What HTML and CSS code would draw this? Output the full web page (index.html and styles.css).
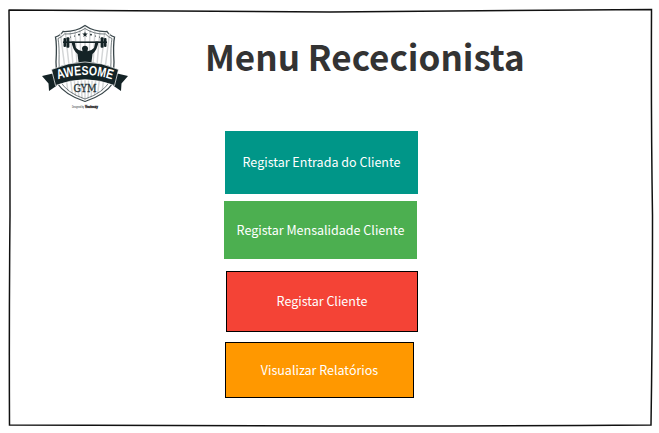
FILE: index.html
```html
<!DOCTYPE html>
<html lang="pt">
<head>
<meta charset="utf-8">
<title>Menu Rececionista</title>
<link rel="stylesheet" href="styles.css">
</head>
<body>
<main class="screen">
  <svg class="frame" viewBox="0 0 659 433" aria-hidden="true">
    <path d="M8.500 10Q170 11.200 330 12Q500 11.200 651.500 9.500Q651 120 652.500 215Q652.500 330 651 425Q490 426.300 330 426Q170 426 9.500 425Q9 320 10 215Q10 110 9 10"/>
  </svg>
  <header class="header">
    <svg class="logo" viewBox="0 0 100 95" role="img" aria-label="Awesome Gym">
      <defs>
        <clipPath id="shield"><path d="M50 7Q38 14 24 13Q22 24 23 42L24 62Q31 73 50 80Q69 73 76 62L77 42Q78 24 76 13Q62 14 50 7Z"/></clipPath>
        <path id="ribbon" d="M20 60.500Q50 49.500 80 60.500"/>
      </defs>
      <path class="rim" d="M50 5.500Q41 12 28 11.500Q26 15 20.500 17Q22 24 21 42L22 63Q30 75 50 81.500Q70 75 78 63L79 42Q78 24 79.500 17Q74 15 72 11.500Q59 12 50 5.500Z"/>
      <g clip-path="url(#shield)">
        <path class="rays" d="M25 10L34 80M30 10L38 80M35 10L41 80M40 10L44 80M45 10L47 80M50 7V80M55 10L53 80M60 10L56 80M65 10L59 80M70 10L62 80M75 10L66 80"/>
      </g>
      <path class="inner" d="M50 8.500Q41 14.500 29.500 14Q27 17 23 18.500Q24.500 26 24 42L25 61Q32 73 50 79Q68 73 75 61L76 42Q75.500 26 77 18.500Q73 17 70.500 14Q59 14.500 50 8.500Z"/>
      <path class="ink" d="M50 11.500L50.700 13.500L52.800 13.600L51.100 14.900L51.700 17L50 15.800L48.300 17L48.900 14.900L47.200 13.600L49.300 13.500Z"/>
      <g class="ink">
        <circle cx="44" cy="14.700" r=".9"/><circle cx="56" cy="14.700" r=".9"/><circle cx="39.500" cy="16" r=".6"/><circle cx="60.500" cy="16" r=".6"/><circle cx="35.500" cy="17" r=".5"/><circle cx="64.500" cy="17" r=".5"/>
        <rect x="28" y="21.400" width="44" height="1.600"/>
        <rect x="28.500" y="18" width="2.500" height="9" rx="1"/><rect x="31.400" y="17.300" width="3" height="10.500" rx="1"/>
        <rect x="65.600" y="17.300" width="3" height="10.500" rx="1"/><rect x="69" y="18" width="2.500" height="9" rx="1"/>
        <path d="M36.500 21.500H39.500L41 28Q43.500 30.800 47.500 31.200L47 28.500Q47.200 25.700 50 25.700Q52.800 25.700 53 28.500L52.500 31.200Q56.500 30.800 59 28L60.500 21.500H63.500Q62.500 29.500 57.500 34L56 46H44L42.500 34Q37.500 29.500 36.500 21.500Z"/>
      </g>
      <path class="ink" d="M7 56L22 52.500V65.500L14 71L13.500 63.500L7 56ZM93 56L78 52.500V65.500L86 71L86.500 63.500L93 56Z"/>
      <path class="band" d="M16.500 49.500Q50 34.500 83.500 49.500L79.500 65.500Q50 54 20.500 65.500Z"/>
      <text class="brand"><textPath href="#ribbon" startOffset="50%" textLength="55" lengthAdjust="spacingAndGlyphs">AWESOME</textPath></text>
      <text class="gym" x="50" y="71.500" textLength="23" lengthAdjust="spacingAndGlyphs">GYM</text>
      <text class="credit" x="37" y="88" textLength="12" lengthAdjust="spacingAndGlyphs">Designed by</text>
      <text class="credit strong" x="50" y="88" textLength="13" lengthAdjust="spacingAndGlyphs">Vecteezy</text>
    </svg>
    <h1 class="title">Menu Rececionista</h1>
  </header>
  <nav class="menu">
    <button class="item entry">Registar Entrada do Cliente</button>
    <button class="item fee">Registar Mensalidade Cliente</button>
    <button class="item client">Registar Cliente</button>
    <button class="item reports">Visualizar Relatórios</button>
  </nav>
</main>
</body>
</html>
```

FILE: styles.css
```css
* { box-sizing: border-box; }
body { margin: 0; background: #fff; font-family: "Noto Sans CJK SC", "Noto Sans", sans-serif; }
.screen { position: relative; width: 659px; height: 433px; overflow: hidden; }
.frame { position: absolute; inset: 0; width: 659px; height: 433px; pointer-events: none; }
.frame path { fill: none; stroke: #111; stroke-width: 1.5; }
.header { display: flex; height: 131px; padding: 20px 0 0 35px; }
.logo { flex: none; width: 100px; height: 95px; }
.title { margin: 9px 0 0 70px; font-size: 35px; line-height: 54px; font-weight: 700; color: #333; white-space: nowrap; }
.menu { display: flex; flex-direction: column; align-items: flex-start; padding-left: 224px; }
.item { padding: 0; border: 0; color: #fff; font: 400 12.53px/20px "Noto Sans CJK SC", "Noto Sans", sans-serif; text-align: center; white-space: nowrap; }
.entry { width: 193px; height: 63px; margin-left: 1px; padding-bottom: 1px; background: #009688; }
.fee { width: 193px; height: 58px; margin-top: 7px; background: #4caf50; }
.client { width: 192px; height: 61px; margin: 12px 0 0 2px; padding-bottom: 1px; background: #f44336; border: 1px solid #000; }
.reports { width: 189px; height: 56px; margin: 10px 0 0 1px; background: #ff9800; border: 1px solid #000; }
.rim { fill: #fff; stroke: #39464a; stroke-width: 1.3; }
.inner { fill: none; stroke: #39464a; stroke-width: .7; }
.rays { fill: none; stroke: #d4d6d7; stroke-width: 1.5; }
.ink { fill: #142326; }
.band { fill: #142326; stroke: #fff; stroke-width: .7; }
.brand { font: 700 13.5px "Liberation Sans", sans-serif; fill: #fff; text-anchor: middle; }
.gym { font: 400 10.5px "DejaVu Serif", serif; fill: #263438; stroke: #263438; stroke-width: .3; text-anchor: middle; }
.credit { font: 2.6px "Liberation Sans", sans-serif; fill: #222; }
.strong { font-weight: 700; font-size: 3.2px; stroke: #222; stroke-width: .3; }
```
